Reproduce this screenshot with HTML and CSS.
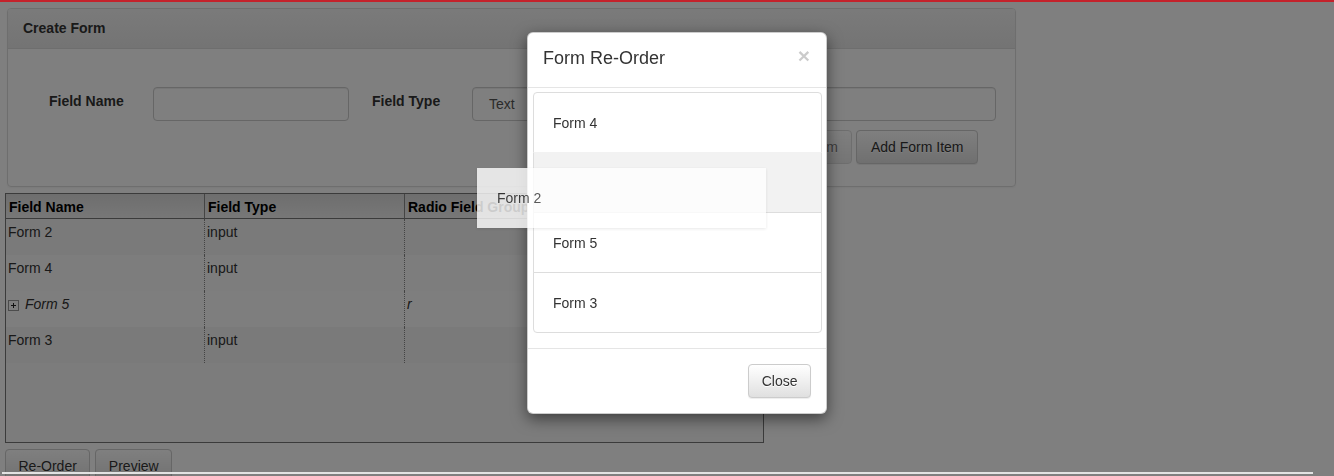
FILE: index.html
```html
<!DOCTYPE html>
<html lang="en">
<head>
<meta charset="utf-8">
<title>Create Form</title>
<link rel="stylesheet" href="styles.css">
</head>
<body>
<div class="page">
  <div class="panel">
    <div class="panel-heading">Create Form</div>
    <div class="panel-body">
      <div class="field-row">
        <label class="lbl lbl-name">Field Name</label>
        <div class="input input-name"></div>
        <label class="lbl lbl-type">Field Type</label>
        <div class="input select">Text</div>
      </div>
      <div class="btn-row">
        <button class="btn" disabled>Update Form Item</button>
        <button class="btn">Add Form Item</button>
      </div>
    </div>
  </div>

  <div class="grid">
    <table class="tree">
      <thead>
        <tr class="head-row">
          <th class="c1">Field Name</th>
          <th class="c2">Field Type</th>
          <th class="c3">Radio Field Group</th>
          <th class="c4">Required</th>
        </tr>
      </thead>
      <tbody>
        <tr class="row r1"><td>Form 2</td><td>input</td><td></td><td></td></tr>
        <tr class="row r2"><td>Form 4</td><td>input</td><td></td><td></td></tr>
        <tr class="row r3"><td class="group"><svg class="expander" width="11" height="11" viewBox="0 0 11 11"><rect x="0.5" y="0.5" width="10" height="10" fill="none" stroke="#333" stroke-dasharray="1 1"/><path d="M3 5.5h5M5.5 3v5" stroke="#222" stroke-width="1"/></svg>Form 5</td><td></td><td class="group">r</td><td></td></tr>
        <tr class="row r4"><td>Form 3</td><td>input</td><td></td><td></td></tr>
      </tbody>
    </table>
  </div>

  <div class="actions">
    <button class="btn">Re-Order</button>
    <button class="btn">Preview</button>
  </div>
</div>

<div class="backdrop"></div>

<div class="modal">
  <div class="modal-header">
    <h4 class="modal-title">Form Re-Order</h4>
    <button class="close">&times;</button>
  </div>
  <div class="modal-body">
    <ul class="list-group">
      <li class="list-item">Form 4</li>
      <li class="list-item placeholder"></li>
      <li class="list-item">Form 5</li>
      <li class="list-item">Form 3</li>
    </ul>
  </div>
  <div class="modal-footer">
    <button class="btn">Close</button>
  </div>
</div>

<div class="drag-helper">Form 2</div>

<div class="top-line"></div>
<div class="bottom-line"></div>
</body>
</html>
```

FILE: styles.css
```css
html, body {
  margin: 0;
  padding: 0;
}

body {
  font-family: "Liberation Sans", Arial, Helvetica, sans-serif;
  font-size: 14px;
  line-height: 20px;
  color: #333;
  background: #fff;
  overflow: hidden;
}

.page {
  padding: 8px 0 0 5px;
}

/* ---------- panel ---------- */
.panel {
  margin-left: 2px;
  width: 1009px;
  box-sizing: border-box;
  border: 1px solid #ddd;
  border-radius: 4px;
  box-shadow: 0 1px 2px rgba(0, 0, 0, 0.05);
}

.panel-heading {
  padding: 10px 15px;
  line-height: 19px;
  font-weight: bold;
  color: #333;
  background-image: linear-gradient(to bottom, #f5f5f5, #e8e8e8);
  border-bottom: 1px solid #ddd;
  border-radius: 3px 3px 0 0;
}

.panel-body {
  padding: 38px 19px 22px 41px;
}

.field-row {
  display: flex;
  align-items: flex-start;
}

.lbl {
  font-weight: bold;
  color: #333;
  padding-top: 4px;
  line-height: 20px;
  box-sizing: border-box;
}

.lbl-name {
  width: 104px;
}

.lbl-type {
  width: 100px;
  margin-left: 23px;
}

.input {
  height: 34px;
  box-sizing: border-box;
  border: 1px solid #ccc;
  border-radius: 4px;
  background: #fff;
  box-shadow: inset 0 1px 1px rgba(0, 0, 0, 0.075);
}

.input-name {
  width: 196px;
}

.select {
  width: 524px;
  padding: 6px 16px;
  color: #555;
}

.btn-row {
  display: flex;
  justify-content: flex-end;
  gap: 4px;
  margin-top: 9px;
  padding-right: 18px;
}

/* ---------- buttons ---------- */
.btn {
  font-family: inherit;
  font-size: 14px;
  line-height: 20px;
  height: 34px;
  box-sizing: border-box;
  padding: 6px 12.5px;
  color: #333;
  border: 1px solid #ccc;
  border-radius: 4px;
  background-image: linear-gradient(to bottom, #fff 0, #e0e0e0 100%);
  text-shadow: 0 1px 0 #fff;
  box-shadow: inset 0 1px 0 rgba(255, 255, 255, 0.15), 0 1px 1px rgba(0, 0, 0, 0.075);
  cursor: pointer;
}

.btn-row .btn {
  padding: 6px 13.5px;
}

.btn[disabled] {
  opacity: 0.65;
  box-shadow: none;
}

/* ---------- grid ---------- */
.grid {
  margin-top: 6px;
  width: 759px;
  height: 250px;
  box-sizing: border-box;
  border: 1px solid #777;
  background: #f9f9f9;
  overflow: hidden;
}

.tree {
  width: 757px;
  table-layout: fixed;
  border-collapse: separate;
  border-spacing: 0;
}

.tree th {
  box-sizing: border-box;
  padding: 2px 3px 0;
  line-height: 22px;
  text-align: left;
  font-weight: bold;
  color: #000;
  white-space: nowrap;
  overflow: hidden;
  background-image: linear-gradient(to bottom, #dcdcdc, #efefef);
  border-bottom: 1px solid #777;
  border-right: 1px solid #888;
}

.tree th.c4 {
  border-right: 0;
}

.tree .c1 { width: 199px; }
.tree .c2 { width: 200px; }
.tree .c3 { width: 200px; }
.tree .c4 { width: 158px; }

.head-row {
  height: 25px;
}

.row {
  height: 36px;
}

.tree td {
  box-sizing: border-box;
  padding: 4px 2px 0;
  line-height: 18px;
  vertical-align: top;
  color: #333;
  white-space: nowrap;
  overflow: hidden;
  border-right: 1px dotted #888;
}

.tree td:last-child {
  border-right: 0;
}

.r1 { background: #f4f4f4; }
.r2 { background: #fbfbfb; }
.r3 { background: #fdfdfd; }
.r4 { background: #f4f4f4; }

.group {
  font-style: italic;
}

.expander {
  display: inline-block;
  vertical-align: -2px;
  margin-right: 6px;
}

.actions {
  display: flex;
  gap: 5px;
  margin-top: 6px;
}

/* ---------- modal ---------- */
.backdrop {
  position: fixed;
  inset: 0;
  background: rgba(0, 0, 0, 0.5);
  z-index: 5;
}

.modal {
  position: absolute;
  left: 527px;
  top: 32px;
  width: 300px;
  box-sizing: border-box;
  background: #fff;
  border: 1px solid rgba(0, 0, 0, 0.2);
  border-radius: 6px;
  box-shadow: 0 5px 15px rgba(0, 0, 0, 0.5);
  z-index: 10;
}

.modal-header {
  display: flex;
  justify-content: space-between;
  align-items: flex-start;
  padding: 13px 15px 17px;
  border-bottom: 1px solid #e5e5e5;
}

.modal-title {
  margin: 0;
  font-size: 18px;
  font-weight: normal;
  line-height: 24px;
  color: #333;
}

.close {
  margin-top: -1px;
  margin-right: 1px;
  padding: 0;
  border: 0;
  background: none;
  font-family: inherit;
  font-size: 21px;
  font-weight: bold;
  line-height: 1;
  color: #000;
  opacity: 0.2;
  text-shadow: 0 1px 0 #fff;
}

.modal-body {
  padding: 4px 4px 15px 5px;
}

.list-group {
  margin: 0;
  padding: 0;
  list-style: none;
}

.list-item {
  padding: 21px 19px 19px;
  line-height: 19px;
  border: 1px solid #ddd;
  margin-bottom: -1px;
  background: #fff;
  color: #333;
}

.list-item:first-child {
  border-radius: 4px 4px 0 0;
}

.list-item:last-child {
  margin-bottom: 0;
  border-radius: 0 0 4px 4px;
}

.placeholder {
  height: 19px;
  background: #f2f2f2;
  border-color: transparent #ddd;
}

.modal-footer {
  padding: 15px;
  border-top: 1px solid #e5e5e5;
  display: flex;
  justify-content: flex-end;
}

/* ---------- drag helper ---------- */
.drag-helper {
  position: absolute;
  left: 477px;
  top: 168px;
  width: 289px;
  height: 60px;
  box-sizing: border-box;
  padding: 0 20px;
  line-height: 60px;
  color: #333;
  background: #fff;
  opacity: 0.8;
  box-shadow: 0 1px 3px rgba(0, 0, 0, 0.12);
  z-index: 20;
}

/* ---------- window chrome lines ---------- */
.top-line {
  position: fixed;
  left: 0;
  right: 0;
  top: 0;
  height: 2px;
  background: #c4222b;
  z-index: 30;
}

.bottom-line {
  position: fixed;
  left: 2px;
  top: 472px;
  width: 1311px;
  height: 2px;
  background: #e2e2e2;
  z-index: 30;
}
```
